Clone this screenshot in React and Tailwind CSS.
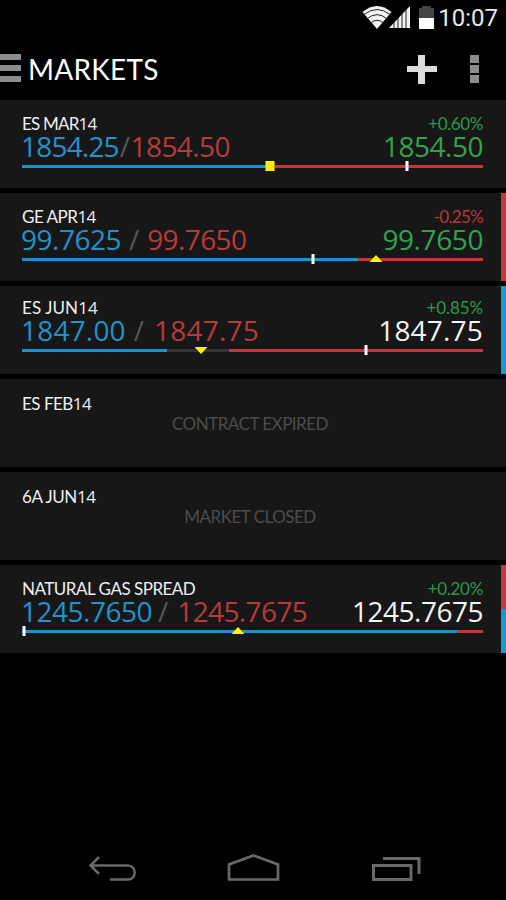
const markets = [
  {
    label: "ES MAR",
    month: "14",
    labelClass: "tracking-[-0.8px]",
    bid: "1854.25",
    bidClass: "tracking-[-0.8px]",
    ask: "1854.50",
    askClass: "tracking-[-0.6px]",
    slashClass: "ml-[1px] mr-[0.5px]",
    last: "1854.50",
    lastColor: "text-[#2fa44f]",
    lastClass: "tracking-[-0.5px]",
    change: "+0.60%",
    changeColor: "text-[#2b9a49]",
    changeClass: "tracking-[-0.4px]",
    pad: "pt-[14px]",
    blueEnd: 248,
    redStart: 248,
    marker: "square",
    markerAt: 248,
    tickAt: 384.5,
  },
  {
    label: "GE APR",
    month: "14",
    labelClass: "tracking-[-0.5px]",
    bid: "99.7625",
    bidClass: "tracking-[-0.5px]",
    ask: "99.7650",
    askClass: "tracking-[-0.6px]",
    slashClass: "mx-[8px]",
    last: "99.7650",
    lastColor: "text-[#2fa44f]",
    lastClass: "tracking-[-0.4px]",
    change: "-0.25%",
    changeColor: "text-[#b93636]",
    changeClass: "tracking-[-0.7px]",
    pad: "pt-[14px]",
    blueEnd: 336,
    redStart: 336,
    marker: "up",
    markerAt: 354,
    tickAt: 291,
    side: ["bg-[#c93638]"],
  },
  {
    label: "ES JUN",
    month: "14",
    labelClass: "tracking-[0.1px]",
    bid: "1847.00",
    bidClass: "tracking-[0.2px]",
    ask: "1847.75",
    askClass: "tracking-[0.2px]",
    slashClass: "ml-[8px] mr-[10px]",
    last: "1847.75",
    lastColor: "text-[#f4f4f4]",
    lastClass: "tracking-[0.2px]",
    change: "+0.85%",
    changeColor: "text-[#2b9a49]",
    changeClass: "tracking-[-0.1px]",
    pad: "pt-[12px]",
    blueEnd: 145,
    redStart: 207,
    marker: "down",
    markerAt: 178.5,
    tickAt: 343.5,
    side: ["bg-[#1b97d5]"],
  },
  { label: "ES FEB", month: "14", labelClass: "tracking-[-0.5px]", pad: "pt-[15px]", notice: "CONTRACT EXPIRED", noticeClass: "tracking-[-0.5px]" },
  { label: "6A JUN", month: "14", labelClass: "tracking-[-0.4px]", pad: "pt-[15px]", notice: "MARKET CLOSED", noticeClass: "tracking-[-0.5px]" },
  {
    label: "NATURAL GAS SPREAD",
    month: "",
    labelClass: "tracking-[-0.5px]",
    bid: "1245.7650",
    bidClass: "tracking-[-0.5px]",
    ask: "1245.7675",
    askClass: "tracking-[-0.6px]",
    slashClass: "ml-[6px] mr-[9px]",
    last: "1245.7675",
    lastColor: "text-[#f4f4f4]",
    lastClass: "tracking-[-0.5px]",
    change: "+0.20%",
    changeColor: "text-[#2b9a49]",
    changeClass: "tracking-[-0.3px]",
    pad: "pt-[14px]",
    blueEnd: 435,
    redStart: 435,
    marker: "up",
    markerAt: 215.5,
    tickAt: 1.5,
    side: ["bg-[#c93638]", "bg-[#1b97d5]"],
  },
];

function StatusBar() {
  return (
    <div className="flex h-9 items-start justify-end pr-[8px]">
      <svg className="mt-[6px] h-[24px] w-[50px]" viewBox="0 0 50 24">
        {/* wifi */}
        <path d="M0.500 6 Q15 -6 29.500 6 L15 23 Z" fill="#f2f2f2" />
        <path d="M2 8.500 Q15 -1.500 28 8.500 M5 12.800 Q15 4.500 25 12.800 M8.500 17 Q15 11.500 21.500 17" fill="none" stroke="#222" strokeWidth="1" />
        {/* signal */}
        <path d="M27 22 L48 0 V22 Z" fill="#f2f2f2" />
        <path d="M32 15v7M36 11v11M40 7v15M44 3v19" stroke="#222" strokeWidth="1" />
      </svg>
      <div className="ml-[7px] mt-[6px] flex w-[15px] flex-col items-center">
        <div className="h-[2px] w-[9px] bg-[#444]" />
        <div className="h-[10px] w-full rounded-t-[1px] bg-[#444]" />
        <div className="h-[11px] w-full bg-white" />
      </div>
      <span className="ml-[4px] mt-[4px] font-['Roboto',sans-serif] text-[24px] leading-[28px] text-[#e8e8e8]">10:07</span>
    </div>
  );
}

function Header() {
  return (
    <div className="flex h-16 items-start">
      <div className="mt-[18px] flex w-[21px] flex-col gap-[5px]">
        <div className="h-[6px] bg-[#8c8c8c]" />
        <div className="h-[6px] bg-[#8c8c8c]" />
        <div className="h-[6px] bg-[#8c8c8c]" />
      </div>
      <h1 className="ml-[7px] mt-[17px] text-[28px] leading-[32px] tracking-[0.25px] text-white">MARKETS</h1>
      <svg className="ml-auto mt-[19px] h-[29px] w-[30px]" viewBox="0 0 30 29">
        <path d="M11 0h7v11h12v6h-12v12h-7v-12h-11v-6h11z" fill="#dcdcdc" />
      </svg>
      <div className="ml-[33px] mr-[27px] mt-[19px] flex w-[9px] flex-col gap-[2px]">
        <div className="h-[8px] bg-[#8c8c8c]" />
        <div className="h-[8px] bg-[#8c8c8c]" />
        <div className="h-[8px] bg-[#8c8c8c]" />
      </div>
    </div>
  );
}

function Marker({ type, at }) {
  if (type === "square") {
    return <div className="absolute top-0 h-[10px] w-[9px] -translate-x-1/2 bg-[#fff200]" style={{ left: at }} />;
  }
  return (
    <svg
      className={`absolute h-[7px] w-[13px] -translate-x-1/2 ${type === "up" ? "top-[1px]" : "top-[2px]"}`}
      viewBox="0 0 13 7"
      style={{ left: at }}
    >
      <path d={type === "up" ? "M0 7L6.500 0L13 7z" : "M0 0L6.500 7L13 0z"} fill="#fff200" />
    </svg>
  );
}

function DepthBar({ market }) {
  return (
    <div className="relative mt-[2px] flex h-[10px] w-[461px] items-center">
      <div className="h-[3px] bg-[#1b93cf]" style={{ width: market.blueEnd }} />
      <div className="h-[3px] bg-[#333]" style={{ width: market.redStart - market.blueEnd }} />
      <div className="h-[3px] flex-1 bg-[#c0383a]" />
      <Marker type={market.marker} at={market.markerAt} />
      <div className="absolute top-0 h-[10px] w-[3px] -translate-x-1/2 bg-white" style={{ left: market.tickAt }} />
    </div>
  );
}

function MarketRow({ market }) {
  return (
    <div className="flex h-[88px] bg-[#171717]">
      <div className={`flex-1 pl-[22px] ${market.pad}`}>
        <div className="flex w-[461px] justify-between text-[17px] leading-[20px]">
          <span className={`text-[#efefef] ${market.labelClass}`}>
            {market.label}
            <span className="font-['Open_Sans',sans-serif]">{market.month}</span>
          </span>
          {market.change && <span className={`${market.changeClass} ${market.changeColor}`}>{market.change}</span>}
        </div>
        {market.notice ? (
          <p className={`w-[456px] text-center text-[17px] leading-[20px] text-[#4c4c4c] ${market.noticeClass}`}>{market.notice}</p>
        ) : (
          <>
            <div className="flex w-[461px] font-['Open_Sans',sans-serif] text-[28px] leading-[25px]">
              <span className={`ml-[-1px] text-[#1f93cd] ${market.bidClass}`}>{market.bid}</span>
              <span className={`text-[#555] ${market.slashClass}`}>/</span>
              <span className={`text-[#b83a3a] ${market.askClass}`}>{market.ask}</span>
              <span className={`ml-auto ${market.lastColor} ${market.lastClass}`}>{market.last}</span>
            </div>
            <DepthBar market={market} />
          </>
        )}
      </div>
      {market.side && (
        <div className="flex w-[5px] flex-col">
          {market.side.map((color) => (
            <div key={color} className={`flex-1 ${color}`} />
          ))}
        </div>
      )}
    </div>
  );
}

function NavBar() {
  return (
    <div className="mt-auto flex h-[60px] items-start pl-[88px] pt-[13px]">
      <svg className="h-[30px] w-[50px]" viewBox="0 0 50 30" fill="none" stroke="#696969" strokeWidth="2.500">
        <path d="M11 4L2.500 12.500L11 21M3 12.500H39.500C49 12.500 49 26.500 39.500 26.500H22" />
      </svg>
      <svg className="ml-[89px] h-[30px] w-[53px]" viewBox="0 0 53 30" fill="none" stroke="#696969" strokeWidth="2.700">
        <path d="M2 26.500V11.500L26.500 2.500L51 11.500V26.500z" />
      </svg>
      <svg className="ml-[91px] h-[30px] w-[50px]" viewBox="0 0 50 30" fill="none" stroke="#696969" strokeWidth="3">
        <path d="M2.500 12.500H40V26.500H2.500zM12 5.500H48V21" />
      </svg>
    </div>
  );
}

export default function App() {
  return (
    <div className="flex h-[900px] w-[506px] flex-col overflow-hidden bg-black font-['Lato',sans-serif]">
      <StatusBar />
      <Header />
      <div className="flex flex-col gap-[5px]">
        {markets.map((market) => (
          <MarketRow key={market.label} market={market} />
        ))}
      </div>
      <NavBar />
    </div>
  );
}
